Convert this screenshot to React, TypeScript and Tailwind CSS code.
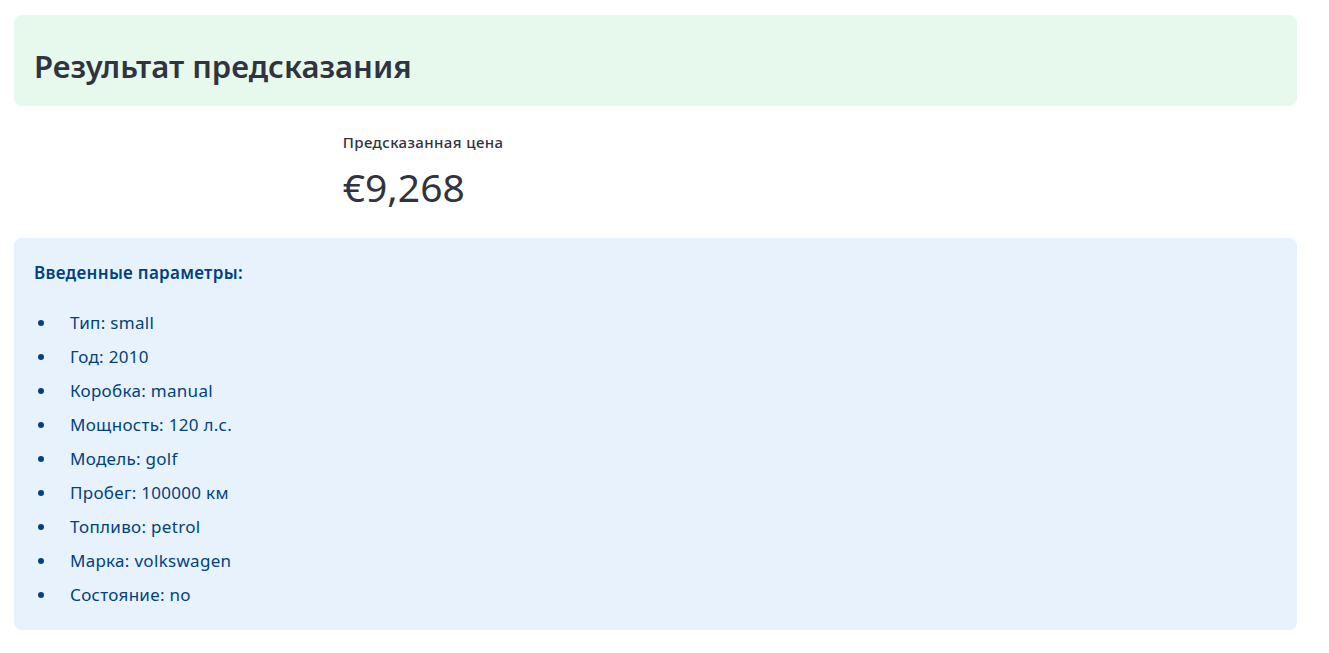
export default function App() {
  const items = [
    "Тип: small",
    "Год: 2010",
    "Коробка: manual",
    "Мощность: 120 л.с.",
    "Модель: golf",
    "Пробег: 100000 км",
    "Топливо: petrol",
    "Марка: volkswagen",
    "Состояние: no",
  ];
  return (
    <div
      className="min-h-[653px] w-full bg-white pl-[14px] pr-[32px] pt-[15px] text-[#31333F]"
      style={{ fontFamily: '"Noto Sans", "Open Sans", sans-serif' }}
    >
      <div className="flex h-[91px] items-center rounded-lg bg-[#e6f9ec] px-[20px] pt-[10px]">
        <h3 className="text-[31px] font-semibold leading-[38px] text-[#31333F]">
          Результат предсказания
        </h3>
      </div>
      <div className="grid grid-cols-[1fr_2fr_1fr] gap-4">
        <div />
        <div className="pt-[26px]">
          <div className="text-[15px] font-medium leading-[20px] tracking-[0.4px] text-[#31333F]">
            Предсказанная цена
          </div>
          <div className="mt-[11px] text-[39px] leading-[48px] text-[#31333F]">€9,268</div>
        </div>
        <div />
      </div>
      <div className="mt-[27px] rounded-lg bg-[#e8f2fc] px-[20px] pb-[23px] pt-[23px] text-[#004280]">
        <div className="text-[17px] font-semibold leading-[24px] tracking-[0.3px]">Введенные параметры:</div>
        <ul className="mt-[26px] flex flex-col gap-[10px]">
          {items.map((t) => (
            <li key={t} className="flex items-center text-[17px] leading-[24px] tracking-[0.3px]">
              <span className="ml-[4px] mr-[26px] h-[6px] w-[6px] shrink-0 rounded-full bg-[#004280]" />
              {t}
            </li>
          ))}
        </ul>
      </div>
    </div>
  );
}
